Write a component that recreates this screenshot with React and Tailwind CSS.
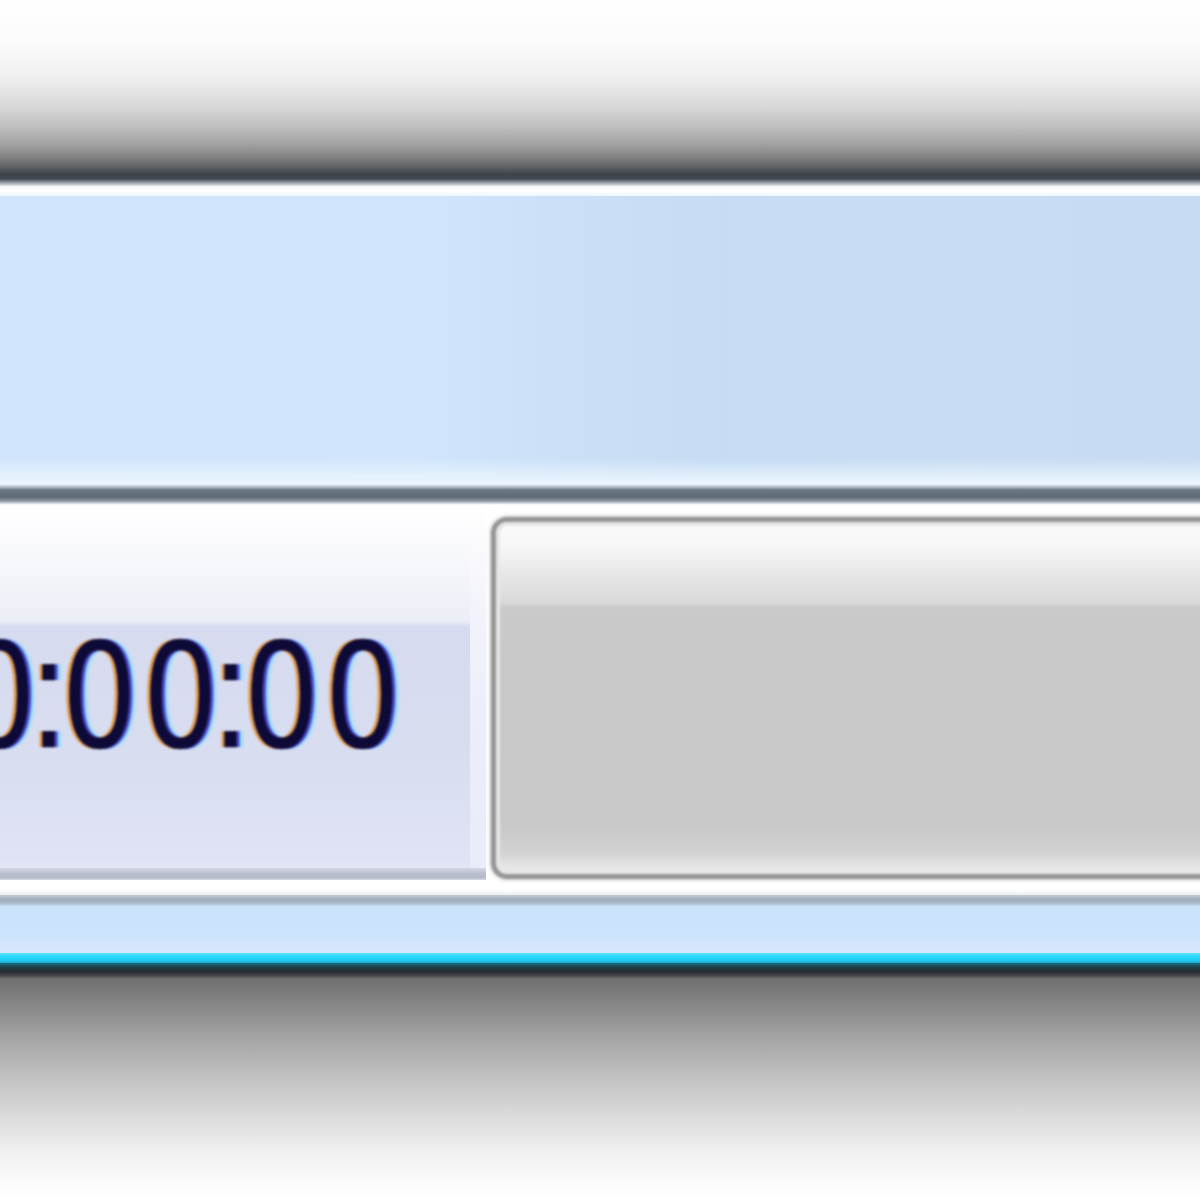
export default function App() {
  const chars = ["0", ":", "0", "0", ":", "0", "0"];
  return (
    <div className="w-[1200px] h-[1200px] overflow-hidden flex flex-col bg-white font-['Liberation_Sans',Arial,sans-serif]">
      {/* top shadow */}
      <div className="h-[186px] shrink-0 bg-[linear-gradient(to_bottom,#ffffff_0px,#fbfbfb_40px,#f3f3f3_70px,#e6e6e6_90px,#d4d4d4_110px,#bdbdbd_128px,#a2a2a2_144px,#858585_156px,#5e6165_167px,#3e434a_174px,#434950_179px,#8a929b_182px,#dfe6ec_186px)]" />
      {/* highlight */}
      <div className="h-[10px] shrink-0 bg-[linear-gradient(to_bottom,#f4f8fb,#ffffff_40%,#eef6ff)]" />
      {/* blue band */}
      <div className="h-[282px] shrink-0 relative bg-[linear-gradient(to_right,#d0e5fb_0%,#d1e6fc_35%,#cbe1f8_45%,#c5dcf3_60%,#c8ddf3_80%,#c6dbf1_100%)]">
        <div className="absolute inset-0 bg-[linear-gradient(to_bottom,rgba(255,255,255,0)_0%,rgba(255,255,255,0)_93%,rgba(240,248,255,0.7)_100%)]" />
      </div>
      {/* separator */}
      <div className="h-[27px] shrink-0 bg-[linear-gradient(to_bottom,#e2f0fd_0px,#eef6ff_6px,#b3bcc6_9px,#6a7682_12px,#5f6b78_19px,#8e99a5_23px,#e8ecf0_26px,#ffffff_27px)]" />
      {/* middle row */}
      <div className="h-[378px] shrink-0 flex bg-white">
        <div className="w-[486px] shrink-0 flex flex-col">
          <div className="h-[363px] flex">
            <div className="flex-1 overflow-hidden bg-[linear-gradient(to_bottom,#ffffff_0px,#f7f8fc_55px,#eceef7_116px,#d6dbef_122px,#d8ddf0_250px,#dfe3f4_355px,#e2e6f6_363px)]">
              <div className="pt-[110px] -ml-[42px] flex text-[156px] leading-none text-[#0e0a38] [-webkit-text-stroke:0.5px_#0e0a38] [text-shadow:-4px_0_0_rgba(228,140,40,0.85),4px_0_0_rgba(60,40,200,0.8),8px_0_1px_rgba(110,225,255,0.6)] blur-[0.8px]">
                {chars.map((c, i) => (
                  <div
                    key={i}
                    className={
                      c === ":"
                        ? "w-[20px] shrink-0 flex justify-center"
                        : "w-[81px] shrink-0 flex justify-center"
                    }
                  >
                    <span className="inline-block scale-x-[0.8]">{c}</span>
                  </div>
                ))}
              </div>
            </div>
            <div className="w-[16px] bg-[linear-gradient(to_bottom,#ffffff_0px,#f8f8fd_60px,#f1f2fb_120px,#eceffa_200px,#e9ecf9_363px)]" />
          </div>
          <div className="h-[12px] bg-[linear-gradient(to_bottom,#d4d8e6,#b8bdcd_50%,#b5bbcb_80%,#d6d9e2)]" />
          <div className="h-[3px] bg-white" />
        </div>
        <div className="w-[5px] shrink-0" />
        <div className="flex-1 pt-[12px] pb-[4px] -mr-[60px]">
          <div className="h-full rounded-[16px] border-[5px] border-[#969696] shadow-[0_0_4px_rgba(120,120,120,0.6),inset_0_0_0_4px_#e6e6e6] bg-[linear-gradient(to_bottom,#fbfbfb_0px,#f7f7f7_25px,#e8e8e8_50px,#dadada_80px,#c9c9c9_86px,#c8c8c8_300px,#d2d2d2_330px,#e6e6e6_345px,#ececec_352px)] blur-[0.8px]" />
        </div>
      </div>
      {/* bottom */}
      <div className="h-[12px] shrink-0 bg-[linear-gradient(to_bottom,#ffffff,#ffffff_60%,#e8edf2)]" />
      <div className="h-[11px] shrink-0 bg-[linear-gradient(to_bottom,#c3ccd5,#9eadbb_40%,#a8b8c6_70%,#c3d9ee)]" />
      <div className="h-[47px] shrink-0 bg-[linear-gradient(to_bottom,#cae3fb_0%,#cce5fc_60%,#d4e6fb_85%,#dae8fb_100%)]" />
      <div className="h-[10px] shrink-0 bg-[linear-gradient(to_bottom,#5fe3ff,#2bd9ff_30%,#22cdf6_70%,#1ea8cc)]" />
      <div className="h-[15px] shrink-0 bg-[linear-gradient(to_bottom,#1a7088,#1f3d48_30%,#262b30_55%,#3e4044_80%,#626262)]" />
      <div className="flex-1 bg-[linear-gradient(to_bottom,#6e6e6e_0px,#7c7c7c_15px,#8e8e8e_35px,#a6a6a6_62px,#c2c2c2_100px,#dcdcdc_140px,#efefef_172px,#fbfbfb_205px,#ffffff_222px)]" />
    </div>
  );
}
